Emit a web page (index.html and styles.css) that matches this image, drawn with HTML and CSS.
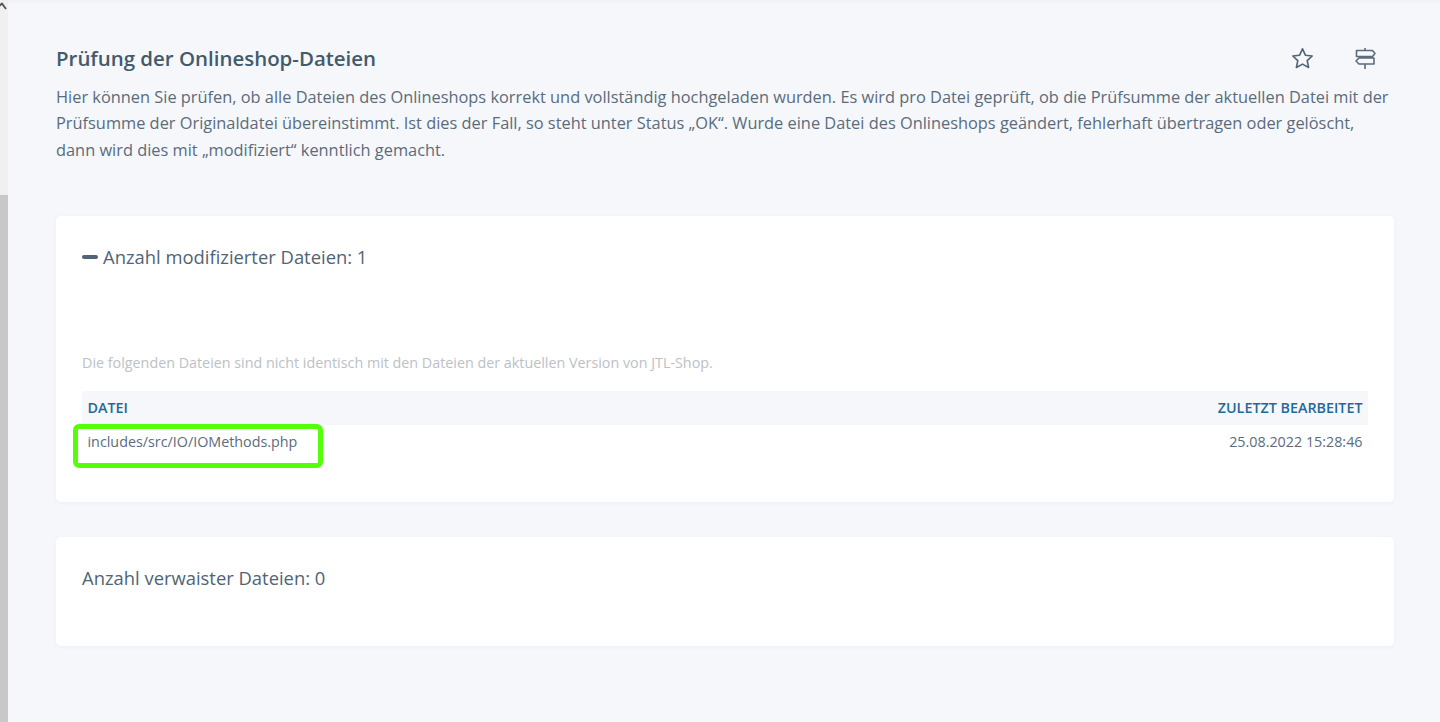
FILE: index.html
```html
<!DOCTYPE html>
<html lang="de">
<head>
<meta charset="utf-8">
<title>Prüfung der Onlineshop-Dateien</title>
<link rel="stylesheet" href="styles.css">
</head>
<body>
<div class="app">
  <aside class="scrollbar">
    <svg class="scroll-arrow" width="8" height="10" viewBox="0 0 8 10"><path d="M-2 7 L2 3.500 L6 9" fill="none" stroke="#505050" stroke-width="1.800"/></svg>
    <div class="scroll-track"></div>
    <div class="scroll-thumb"></div>
  </aside>
  <main class="content">
    <header class="page-head">
      <h1 class="page-title">Prüfung der Onlineshop-Dateien</h1>
      <div class="page-actions">
        <svg class="icon" width="24" height="24" viewBox="0 0 24 24"><path d="M12.500 1.800l2.900 6.400 6.800.8-5 4.700 1.400 6.800-6.100-3.400-6.100 3.400 1.400-6.800-5-4.700 6.800-.8z" fill="none" stroke="#4f6475" stroke-width="1.600" stroke-linejoin="round"/></svg>
        <svg class="icon" width="24" height="24" viewBox="0 0 24 24"><path d="M12 1v2.500M12 9.500V11M12 17v5M3.500 3.500H19.500l2.500 3-2.500 3H3.500zM21 11H6l-3 3 3 3h15z" fill="none" stroke="#5a6c7c" stroke-width="1.600" stroke-linejoin="round"/></svg>
      </div>
    </header>
    <p class="intro">Hier können Sie prüfen, ob alle Dateien des Onlineshops korrekt und vollständig hochgeladen wurden. Es wird pro Datei geprüft, ob die Prüfsumme der aktuellen Datei mit der Prüfsumme der Originaldatei übereinstimmt. Ist dies der Fall, so steht unter Status „OK“. Wurde eine Datei des Onlineshops geändert, fehlerhaft übertragen oder gelöscht, dann wird dies mit „modifiziert“ kenntlich gemacht.</p>

    <section class="card card-files">
      <h2 class="card-title"><span class="collapse-bar"></span>Anzahl modifizierter Dateien: 1</h2>
      <p class="note">Die folgenden Dateien sind nicht identisch mit den Dateien der aktuellen Version von JTL-Shop.</p>
      <div class="table-wrap">
        <table class="files">
          <thead>
            <tr><th>Datei</th><th class="right">Zuletzt bearbeitet</th></tr>
          </thead>
          <tbody>
            <tr><td>includes/src/IO/IOMethods.php</td><td class="right">25.08.2022 15:28:46</td></tr>
          </tbody>
        </table>
        <div class="highlight"></div>
      </div>
    </section>

    <section class="card card-orphans">
      <h2 class="card-title">Anzahl verwaister Dateien: 0</h2>
    </section>
  </main>
</div>
</body>
</html>
```
FILE: styles.css
```css
* { box-sizing: border-box; }
html, body { margin: 0; height: 100%; }
body {
  background: #f5f7fb;
  color: #4f6475;
  font-family: "Open Sans", sans-serif;
  overflow: hidden;
}
.app { display: flex; height: 722px; }
.scrollbar {
  position: relative;
  width: 8px;
  flex: none;
  display: flex;
  flex-direction: column;
}
.scroll-arrow { position: absolute; top: 0; left: 0; }
.scroll-track { height: 195px; background: #f0f0f0; }
.scroll-thumb { flex: 1; background: #c8c8c8; }
.content {
  flex: 1;
  padding: 44px 46px 0 48px;
  border-top: 3px solid #f2f3f6;
}
.page-head {
  display: flex;
  justify-content: space-between;
  align-items: center;
  height: 24px;
}
.page-title {
  margin: -2px 0 0;
  font-size: 20.45px;
  font-weight: 600;
  line-height: 24px;
  color: #435a6b;
}
.page-actions { display: flex; gap: 39px; padding-right: 17px; }
.icon { display: block; }
.intro {
  margin: 13px 0 0;
  font-size: 16.36px;
  line-height: 26.4px;
  color: #5a6c7c;
}
.card {
  background: #fff;
  border-radius: 5px;
  box-shadow: 0 1px 4px rgba(80, 100, 130, .06);
  padding: 26px;
}
.card-files { margin-top: 52.3px; height: 286px; }
.card-orphans { margin-top: 35px; height: 109px; }
.card-title {
  margin: 0;
  font-size: 18.4px;
  font-weight: 400;
  line-height: 30px;
  color: #4f6475;
  display: flex;
  align-items: center;
}
.collapse-bar {
  width: 16px;
  height: 4px;
  border-radius: 2px;
  background: #4f6475;
  margin-right: 5px;
}
.note {
  margin: 0;
  padding-top: 80px;
  font-size: 14.32px;
  line-height: 21px;
  color: #bcc1c6;
}
.table-wrap { position: relative; margin-top: 18px; }
.files { width: 100%; border-collapse: collapse; font-size: 14.32px; }
.files th {
  background: #f5f7fb;
  color: #1f6a99;
  font-size: 14.32px;
  font-weight: 600;
  text-transform: uppercase;
  text-align: left;
  height: 34px;
  padding: 0 5.5px;
}
.files td {
  padding: 6px 5.5px;
  line-height: 21px;
  color: #5a6c7c;
}
.files .right { text-align: right; }
.highlight {
  position: absolute;
  left: -9px;
  top: 33px;
  width: 250px;
  height: 44px;
  border: 5px solid #55ff0a;
  border-radius: 6px;
}
```
